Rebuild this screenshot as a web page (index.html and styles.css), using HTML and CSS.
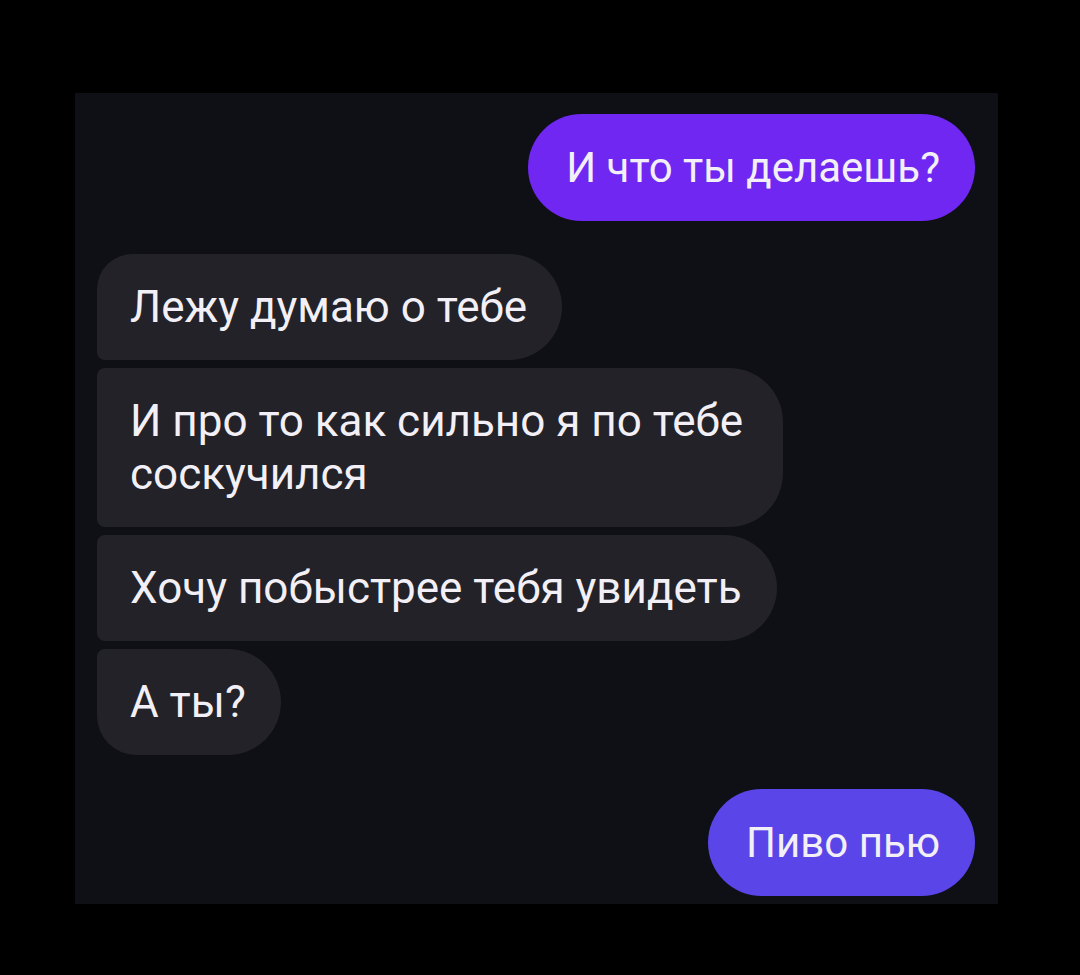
FILE: index.html
```html
<!DOCTYPE html>
<html lang="ru">

<head>
  <meta charset="UTF-8" />
  <title>Чат</title>
  <meta name="viewport" content="width=device-width, initial-scale=1.0" />
  <link rel="stylesheet" href="styles.css">
</head>

<body>
  <main class="chat">
    <div class="msg out purple">И что ты делаешь?</div>

    <div class="group">
      <div class="msg in first">Лежу думаю о тебе</div>
      <div class="msg in mid wide">И про то как сильно я по тебе соскучился</div>
      <div class="msg in mid">Хочу побыстрее тебя увидеть</div>
      <div class="msg in last">А ты?</div>
    </div>

    <div class="msg out blue">Пиво пью</div>
  </main>
</body>

</html>
```

FILE: styles.css
```css
* {
  box-sizing: border-box;
  margin: 0;
  padding: 0;
}

body {
  background: #000;
  font-family: Roboto, 'Noto Sans', sans-serif;
  min-height: 100vh;
  padding: 93px 82px 71px 75px;
}

.chat {
  background: #0f1016;
  width: 923px;
  height: 811px;
  padding: 21px 23px 9px 22px;
  display: flex;
  flex-direction: column;
}

.group {
  display: flex;
  flex-direction: column;
  align-items: flex-start;
  gap: 8px;
  margin: 33px 0 34px;
}

.msg {
  font-size: 44px;
  line-height: 53px;
  color: #f2f0f6;
  padding: 27px 35px 26px 33px;
  border-radius: 54px;
}

.out {
  align-self: flex-end;
  font-size: 42px;
  padding: 27px 35px 27px 38px;
}

.purple {
  background: #7027f2;
}

.blue {
  background: #5a45e8;
}

.in {
  background: #222228;
}

.first {
  border-radius: 36px 54px 54px 8px;
}

.mid {
  border-radius: 8px 54px 54px 8px;
}

.wide {
  max-width: 686px;
}

.last {
  border-radius: 8px 54px 54px 40px;
}
```
